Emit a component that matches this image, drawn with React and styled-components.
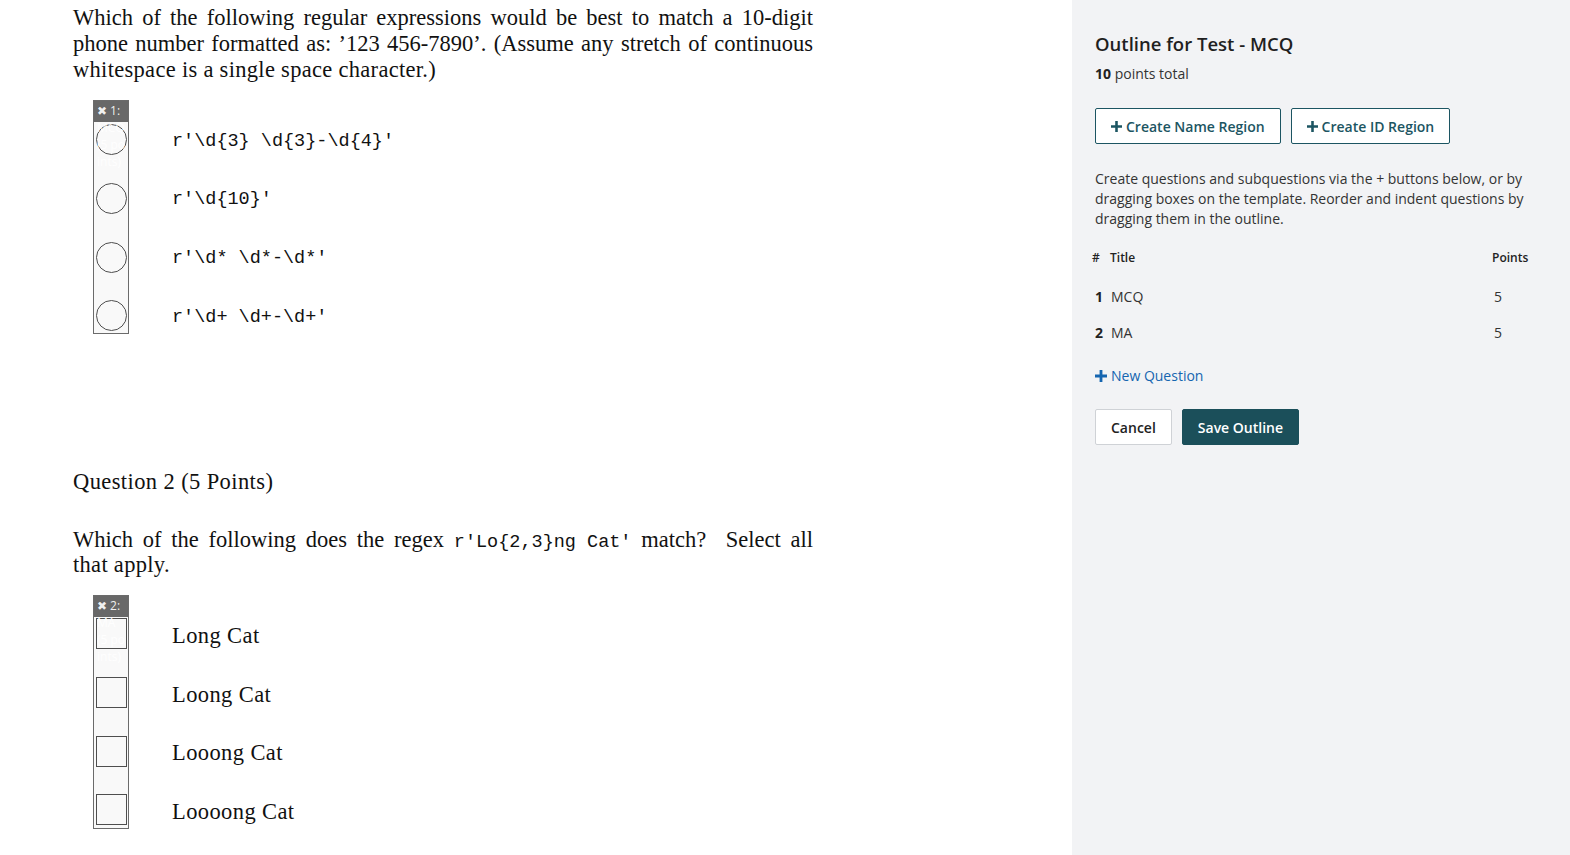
import React from "react";
import styled, { createGlobalStyle } from "styled-components";

const Global = createGlobalStyle`
  html, body { margin: 0; padding: 0; background: #fff; }
  body { font-family: "Open Sans", "Noto Sans", sans-serif; }
`;

const Page = styled.div`
  display: flex;
  min-height: 855px;
  width: 1570px;
`;

const Template = styled.div`
  flex: 0 0 1072px;
  background: #fff;
  padding: 5px 0 0 73px;
  box-sizing: border-box;
  font-family: "Liberation Serif", "DejaVu Serif", serif;
  color: #111;
`;

const Para = styled.div`
  width: 740px;
  margin-top: ${(p) => p.$mt || 0}px;
  font-size: 22.5px;
  letter-spacing: 0;
`;

const Line = styled.span`
  display: block;
  height: ${(p) => p.$lh || 26}px;
  line-height: ${(p) => p.$lh || 26}px;
  white-space: nowrap;
  text-align: ${(p) => (p.$last ? "left" : "justify")};
  text-align-last: ${(p) => (p.$last ? "left" : "justify")};
  letter-spacing: ${(p) => (p.$last ? 0.3 : 0)}px;
`;

const Heading = styled.div`
  margin-top: ${(p) => p.$mt}px;
  font-size: 22.5px;
  letter-spacing: 0.4px;
  line-height: 26px;
`;

const Mono = styled.span`
  display: inline-block;
  font-family: "Liberation Mono", "DejaVu Sans Mono", monospace;
  font-size: 18.5px;
  letter-spacing: 0;
  line-height: 1;
  text-align-last: left;
`;

const OptionList = styled.div`
  position: relative;
  margin-top: ${(p) => p.$mt}px;
`;

const OptionRow = styled.div`
  display: flex;
  align-items: center;
  height: 58.67px;
`;

const MarkerCell = styled.div`
  width: 99px;
  padding-left: 23px;
  box-sizing: border-box;
  display: flex;
  align-items: center;
`;

const Circle = styled.div`
  width: 31px;
  height: 31px;
  border-radius: 50%;
  border: 1.7px solid #2a2a2a;
  box-sizing: border-box;
  margin-top: -1px;
`;

const Square = styled.div`
  width: 31px;
  height: 31px;
  border: 1.7px solid #2a2a2a;
  box-sizing: border-box;
  margin-top: -2px;
`;

const OptionText = styled.div`
  padding-top: 2px;
  font-size: ${(p) => (p.$mono ? 18.5 : 22.5)}px;
  letter-spacing: ${(p) => (p.$mono ? 0 : 0.4)}px;
  font-family: ${(p) =>
    p.$mono
      ? `"Liberation Mono", "DejaVu Sans Mono", monospace`
      : `"Liberation Serif", "DejaVu Serif", serif`};
`;

const RegionBox = styled.div`
  position: absolute;
  left: 20px;
  top: ${(p) => p.$top}px;
  width: 36px;
  height: 234px;
  box-sizing: border-box;
  border: 1px solid #6b6b6b;
  background: rgba(225, 225, 225, 0.2);
  font-family: "Open Sans", "Noto Sans", sans-serif;
`;

const RegionHeader = styled.div`
  height: 21px;
  background: #686868;
`;

const RegionLabel = styled.div`
  position: absolute;
  left: 3px;
  top: 1px;
  width: 30px;
  font-size: 12px;
  line-height: 17px;
  color: rgba(255, 255, 255, 0.92);
  word-break: break-all;
`;

const Panel = styled.aside`
  flex: 1;
  background: #f2f3f5;
  padding: 31px 24px 0 23px;
  box-sizing: border-box;
  color: #222;
`;

const Title = styled.h1`
  margin: 0;
  font-size: 18.5px;
  line-height: 26px;
  font-weight: 600;
  color: #1f1f1f;
`;

const Total = styled.div`
  margin-top: 7px;
  font-size: 14px;
  line-height: 20px;
  color: #333;
  b { font-weight: 700; color: #222; }
`;

const ButtonRow = styled.div`
  display: flex;
  gap: ${(p) => p.$gap || 10}px;
  margin-top: ${(p) => p.$mt}px;
`;

const OutlineButton = styled.button`
  height: 36px;
  padding: 0 15px;
  border: 1px solid #1c5562;
  border-radius: 2px;
  background: #fff;
  color: #1c5562;
  font-family: "Open Sans", "Noto Sans", sans-serif;
  font-size: 14px;
  font-weight: 600;
  display: inline-flex;
  align-items: center;
  gap: 4px;
`;

const PlainButton = styled.button`
  height: 36px;
  padding: 0 15px;
  border: 1px solid ${(p) => (p.$primary ? "#1b4f5a" : "#cfd2d6")};
  border-radius: 2px;
  background: ${(p) => (p.$primary ? "#1b4f5a" : "#fff")};
  color: ${(p) => (p.$primary ? "#fff" : "#222")};
  font-family: "Open Sans", "Noto Sans", sans-serif;
  font-size: 14px;
  font-weight: 600;
`;

const Help = styled.p`
  margin: 25px 0 0;
  font-size: 14px;
  line-height: 20px;
  color: #333;
`;

const Table = styled.div`
  margin-top: 21px;
  margin-left: -3px;
`;

const HeadRow = styled.div`
  display: grid;
  grid-template-columns: 18px 382px auto;
  font-size: 12px;
  line-height: 16px;
  font-weight: 600;
  color: #222;
  padding-bottom: 12px;
`;

const Row = styled.div`
  display: grid;
  grid-template-columns: 16px 383px auto;
  height: 36px;
  align-items: center;
  font-size: 14px;
  color: #333;
  padding-left: 3px;
`;

const Num = styled.span`
  font-weight: 700;
  color: #222;
`;

const AddLink = styled.a`
  display: inline-flex;
  align-items: center;
  gap: 4px;
  margin-top: 16px;
  font-size: 14px;
  line-height: 20px;
  color: #1565b0;
  text-decoration: none;
`;

const Plus = ({ size = 11 }) => (
  <svg width={size} height={size} viewBox="0 0 12 12" aria-hidden>
    <path d="M4.6 0h2.8v4.6H12v2.8H7.4V12H4.6V7.4H0V4.6h4.6z" fill="currentColor" />
  </svg>
);

const mcq = ["r'\\d{3} \\d{3}-\\d{4}'", "r'\\d{10}'", "r'\\d* \\d*-\\d*'", "r'\\d+ \\d+-\\d+'"];
const ma = ["Long Cat", "Loong Cat", "Looong Cat", "Loooong Cat"];

export default function App() {
  return (
    <>
      <Global />
      <Page>
        <Template>
          <Para>
            <Line>Which of the following regular expressions would be best to match a 10-digit</Line>
            <Line>phone number formatted as: ’123 456-7890’. (Assume any stretch of continuous</Line>
            <Line $last>whitespace is a single space character.)</Line>
          </Para>
          <OptionList $mt={28}>
            <RegionBox $top={-11}>
              <RegionHeader />
              <RegionLabel>✖ 1: MCQ (5 points)</RegionLabel>
            </RegionBox>
            {mcq.map((t) => (
              <OptionRow key={t}>
                <MarkerCell>
                  <Circle />
                </MarkerCell>
                <OptionText $mono>{t}</OptionText>
              </OptionRow>
            ))}
          </OptionList>
          <Heading $mt={123}>Question 2 (5 Points)</Heading>
          <Para $mt={32}>
            <Line $lh={25}>
              Which of the following does the regex <Mono>r'Lo{"{"}2,3{"}"}ng Cat'</Mono> match?&nbsp; Select all
            </Line>
            <Line $lh={25} $last>
              that apply.
            </Line>
          </Para>
          <OptionList $mt={29}>
            <RegionBox $top={-11}>
              <RegionHeader />
              <RegionLabel>✖ 2: MA (5 points)</RegionLabel>
            </RegionBox>
            {ma.map((t) => (
              <OptionRow key={t}>
                <MarkerCell>
                  <Square />
                </MarkerCell>
                <OptionText>{t}</OptionText>
              </OptionRow>
            ))}
          </OptionList>
        </Template>
        <Panel>
          <Title>Outline for Test - MCQ</Title>
          <Total>
            <b>10</b> points total
          </Total>
          <ButtonRow $mt={24} $gap={10}>
            <OutlineButton>
              <Plus /> Create Name Region
            </OutlineButton>
            <OutlineButton>
              <Plus /> Create ID Region
            </OutlineButton>
          </ButtonRow>
          <Help>
            Create questions and subquestions via the + buttons below, or by dragging boxes on the
            template. Reorder and indent questions by dragging them in the outline.
          </Help>
          <Table>
            <HeadRow>
              <span>#</span>
              <span>Title</span>
              <span>Points</span>
            </HeadRow>
            <Row>
              <Num>1</Num>
              <span>MCQ</span>
              <span>5</span>
            </Row>
            <Row>
              <Num>2</Num>
              <span>MA</span>
              <span>5</span>
            </Row>
          </Table>
          <AddLink href="#">
            <Plus size={12} /> New Question
          </AddLink>
          <ButtonRow $mt={22} $gap={10}>
            <PlainButton>Cancel</PlainButton>
            <PlainButton $primary>Save Outline</PlainButton>
          </ButtonRow>
        </Panel>
      </Page>
    </>
  );
}
